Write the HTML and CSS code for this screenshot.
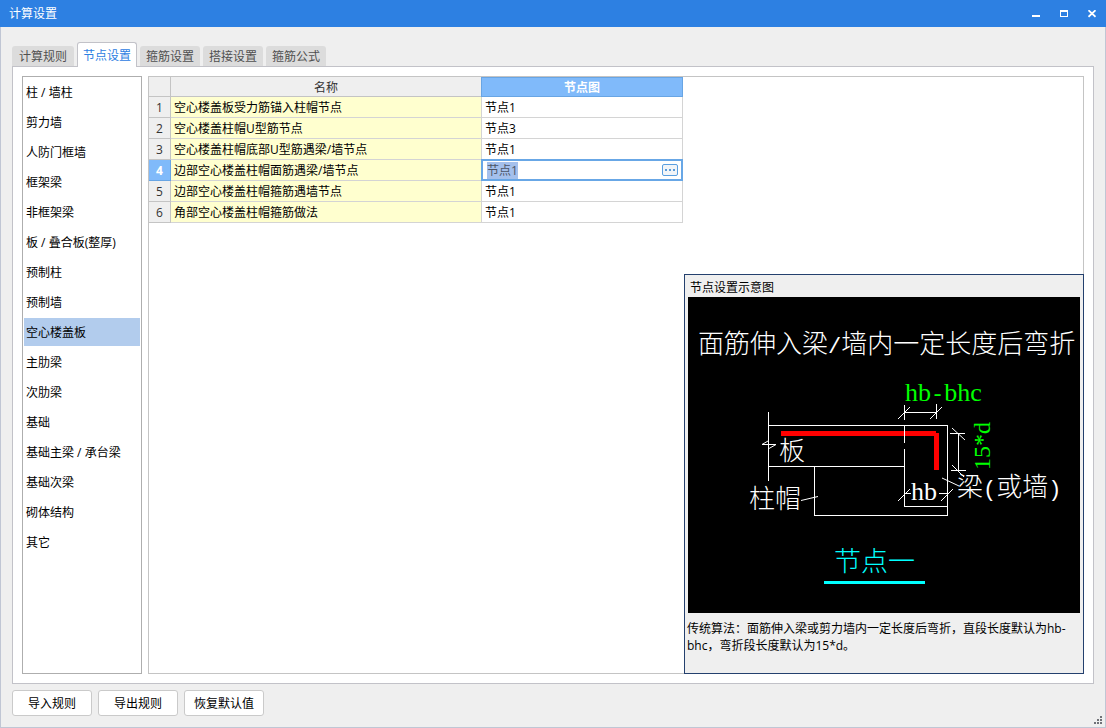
FILE: index.html
```html
<!DOCTYPE html>
<html lang="zh-CN">
<head>
<meta charset="utf-8">
<title>计算设置</title>
<link rel="stylesheet" href="styles.css">
</head>
<body>
<div class="window">
  <header class="titlebar">
    <h1 class="titlebar-text">计算设置</h1>
    <div class="window-controls">
      <button type="button" class="window-button" aria-label="最小化"><svg width="8" height="8" shape-rendering="crispEdges"><rect x="0" y="5" width="8" height="2" fill="#fff"/></svg></button>
      <button type="button" class="window-button" aria-label="最大化"><svg width="8" height="8" shape-rendering="crispEdges"><path d="M0 0h8v7H0zM1 2v4h6V2z" fill="#fff" fill-rule="evenodd"/></svg></button>
      <button type="button" class="window-button" aria-label="关闭"><svg width="8" height="8" viewBox="0 0 8 8"><path d="M0.5 0.2L7.5 6.8M7.5 0.2L0.5 6.8" stroke="#fff" stroke-width="1.7"/></svg></button>
    </div>
  </header>

  <main class="content">
    <nav class="tabs" role="tablist">
      <button type="button" class="tab" role="tab">计算规则</button>
      <button type="button" class="tab tab-active" role="tab" aria-selected="true">节点设置</button>
      <button type="button" class="tab" role="tab">箍筋设置</button>
      <button type="button" class="tab" role="tab">搭接设置</button>
      <button type="button" class="tab" role="tab">箍筋公式</button>
    </nav>

    <section class="page">
      <ul class="categories">
        <li class="category">柱 / 墙柱</li>
        <li class="category">剪力墙</li>
        <li class="category">人防门框墙</li>
        <li class="category">框架梁</li>
        <li class="category">非框架梁</li>
        <li class="category">板 / 叠合板(整厚)</li>
        <li class="category">预制柱</li>
        <li class="category">预制墙</li>
        <li class="category category-selected">空心楼盖板</li>
        <li class="category">主肋梁</li>
        <li class="category">次肋梁</li>
        <li class="category">基础</li>
        <li class="category">基础主梁 / 承台梁</li>
        <li class="category">基础次梁</li>
        <li class="category">砌体结构</li>
        <li class="category">其它</li>
      </ul>

      <div class="grid-area">
        <table class="grid">
          <thead>
            <tr><th class="col-index"></th><th class="col-name">名称</th><th class="col-node head-active">节点图</th></tr>
          </thead>
          <tbody>
            <tr><th>1</th><td class="name">空心楼盖板受力筋锚入柱帽节点</td><td>节点1</td></tr>
            <tr><th>2</th><td class="name">空心楼盖柱帽U型筋节点</td><td>节点3</td></tr>
            <tr><th>3</th><td class="name">空心楼盖柱帽底部U型筋遇梁/墙节点</td><td>节点1</td></tr>
            <tr><th class="head-active">4</th><td class="name">边部空心楼盖柱帽面筋遇梁/墙节点</td><td class="editing"><div class="editor"><input class="editor-input" type="text" value="节点1" aria-label="节点图"><button type="button" class="editor-more" aria-label="选择节点图"><svg width="10" height="2" shape-rendering="crispEdges"><path d="M0 0h2v2H0zM4 0h2v2H4zM8 0h2v2H8z" fill="#5a9bd8"/></svg></button></div></td></tr>
            <tr><th>5</th><td class="name">边部空心楼盖柱帽箍筋遇墙节点</td><td>节点1</td></tr>
            <tr><th>6</th><td class="name">角部空心楼盖柱帽箍筋做法</td><td>节点1</td></tr>
          </tbody>
        </table>

        <aside class="preview">
          <h2 class="preview-title">节点设置示意图</h2>
          <svg class="drawing" viewBox="0 0 392 316" role="img" aria-label="节点一">
            <rect width="392" height="316" fill="#000"/>
            <path d="M93 134H248V136H251V173H246V139H93Z" fill="#f00" shape-rendering="crispEdges"/>
            <g class="lines" shape-rendering="crispEdges">
              <path d="M80.5 115V184"/>
              <path d="M80 128.5H259.5V218.5H126.5V169"/>
              <path d="M80 169.5H216.5"/>
              <path d="M216.5 108V123M216.5 129V146M216.5 152V209.5H259"/>
              <path d="M216 115.5H249M248.5 107V122"/>
              <path d="M262 136.5H277M270.5 136V173M263 173.5H278"/>
              <path d="M216 196.5H223M251 196.5H260"/>
            </g>
            <g class="lines">
              <path d="M80 144L74 147.5H88L81 151.5"/>
              <path d="M113 203.5L130 199.5"/>
              <path d="M210 122L222 110M242 122L254 110"/>
              <path d="M264 131L277 143M264 168L276 180"/>
              <path d="M254 181L271 189"/>
              <path d="M210 204L222 192M253 204L265 192"/>
            </g>
            <g class="label">
              <text x="10" y="56">面筋伸入梁<tspan class="half">/</tspan>墙内一定长度后弯折</text>
              <text x="91" y="163">板</text>
              <text x="61" y="211">柱帽</text>
              <text x="223" y="203">hb</text>
              <text x="269" y="199">梁<tspan class="half">(</tspan>或墙<tspan class="half">)</tspan></text>
            </g>
            <g class="label label-green">
              <text x="217" y="104">hb<tspan class="half">-</tspan>bhc</text>
              <text class="label-vertical" transform="translate(302 173) rotate(-90)">15*d</text>
            </g>
            <text class="label label-cyan" x="146" y="274">节点一</text>
            <rect x="136" y="284" width="101" height="3" fill="#0ff"/>
          </svg>
          <p class="preview-note">传统算法：面筋伸入梁或剪力墙内一定长度后弯折，直段长度默认为hb-bhc，弯折段长度默认为15*d。</p>
        </aside>
      </div>
    </section>

    <footer class="actions">
      <button type="button" class="action">导入规则</button>
      <button type="button" class="action">导出规则</button>
      <button type="button" class="action">恢复默认值</button>
    </footer>
  </main>
  <svg class="grip" width="8" height="8" shape-rendering="crispEdges"><path d="M6 0h2v2H6zM3 3h2v2H3zM6 3h2v2H6zM0 6h2v2H0zM3 6h2v2H3zM6 6h2v2H6z" fill="#707278"/></svg>
</div>
</body>
</html>
```
FILE: styles.css
```css
* {
  box-sizing: border-box;
}

body {
  margin: 0;
  font: 12px/16px "Open Sans", "Noto Sans CJK SC", sans-serif;
  color: #000;
}

button,
input {
  margin: 0;
  padding: 0;
  font: inherit;
}

.window {
  position: relative;
  display: flex;
  flex-direction: column;
  min-height: 100vh;
  background: #efefef;
  border: 1px solid #c0c6d4;
  border-top: 0;
}

.titlebar {
  display: flex;
  align-items: center;
  justify-content: space-between;
  height: 27px;
  margin: 0 -1px;
  padding: 0 10px 0 9px;
  background: #2d80e2;
  color: #fff;
}

.titlebar-text {
  margin: 0;
  font-size: 12px;
  font-weight: 400;
}

.window-controls {
  display: flex;
  gap: 20px;
}

.window-button {
  display: flex;
  width: 8px;
  height: 8px;
  border: 0;
  background: none;
}

.content {
  flex: 1;
  display: flex;
  flex-direction: column;
  padding: 15px 11px 11px;
}

.tabs {
  display: flex;
  align-items: flex-end;
  gap: 3px;
  height: 25px;
  margin-bottom: -1px;
}

.tab {
  width: 60px;
  height: 20px;
  margin-bottom: 1px;
  padding-top: 2px;
  border: 0;
  border-radius: 3px 3px 0 0;
  background: #dcdcdc;
  color: #505050;
}

.tab:first-child {
  width: 62px;
}

.tab-active {
  position: relative;
  height: 25px;
  margin-bottom: 0;
  border: 1px solid #c2c2c8;
  border-bottom: 0;
  background: #fff;
  color: #2d80e2;
}

.page {
  flex: 1;
  display: flex;
  gap: 6px;
  padding: 9px;
  border: 1px solid #c2c2c8;
  background: #fff;
}

.categories {
  display: flex;
  flex-direction: column;
  gap: 2px;
  width: 120px;
  margin: 0;
  padding: 1px;
  border: 1px solid #aeaeae;
  list-style: none;
}

.category {
  padding: 7px 2px 5px;
  white-space: nowrap;
}

.category-selected {
  background: #b2cced;
}

.grid-area {
  position: relative;
  flex: 1;
  border: 1px solid #c4c4c4;
}

.grid {
  width: 534px;
  table-layout: fixed;
  border-collapse: separate;
  border-spacing: 0;
}

.col-index {
  width: 22px;
}

.col-name {
  width: 311px;
}

.grid th,
.grid td {
  height: 21px;
  padding: 2px 3px 0;
  border: solid #d4d4d4;
  border-width: 0 1px 1px 0;
  text-align: left;
  white-space: nowrap;
}

.grid th {
  padding: 2px 0 0;
  border-color: #c4c4c4;
  background: #efefef;
  color: #333;
  font-weight: 400;
  text-align: center;
}

.grid thead th {
  height: 20px;
}

.grid .name {
  background: #ffffcf;
}

.grid .head-active {
  border-color: #68a5e4;
  background: #80bafa;
  box-shadow: -1px 0 #68a5e4, inset 0 1px #68a5e4;
  color: #fff;
  font-weight: 700;
}

.grid tbody .head-active {
  box-shadow: none;
}

.grid .editing {
  padding: 0;
}

.editor {
  display: flex;
  align-items: center;
  height: 20px;
  padding: 0 4px 0 5px;
  background: #fff;
  outline: 2px solid #68a7e6;
  outline-offset: -1px;
}

.editor-input {
  flex: 1;
  min-width: 0;
  height: 17px;
  border: 0;
  outline: 0;
  background: linear-gradient(#a4c0ec, #a4c0ec) 0 0 / 31px 17px no-repeat;
  color: #4c5566;
}

.editor-more {
  display: flex;
  align-items: center;
  justify-content: center;
  width: 16px;
  height: 12px;
  border: 1px solid #5a9fe0;
  border-radius: 2px;
  background: #f2f5f8;
}

.preview {
  position: absolute;
  right: -1px;
  bottom: -1px;
  width: 400px;
  height: 400px;
  padding: 0 3px;
  border: 1px solid #24406e;
  background: #efefef;
}

.preview-title {
  margin: 0;
  padding: 5px 2px 1px;
  font-size: 12px;
  font-weight: 400;
}

.drawing {
  display: block;
  width: 100%;
}

.preview-note {
  margin: 7px -2px 0 -1px;
  line-height: 17px;
}

.lines {
  fill: none;
  stroke: #fff;
}

.label {
  fill: #fff;
  font: 300 26px "Liberation Serif", "Noto Sans CJK SC", serif;
}

.half {
  font: 22px "Liberation Mono", monospace;
}

.label-green {
  fill: #0f0;
}

.label-vertical {
  font-size: 24px;
}

.label-cyan {
  fill: #0ff;
  font-size: 27px;
}

.actions {
  display: flex;
  gap: 6px;
  margin-top: 6px;
}

.action {
  width: 80px;
  height: 26px;
  padding-top: 2px;
  border: 1px solid #cacaca;
  border-radius: 3px;
  background: #fff;
}

.grip {
  position: absolute;
  right: 3px;
  bottom: 3px;
}
```
